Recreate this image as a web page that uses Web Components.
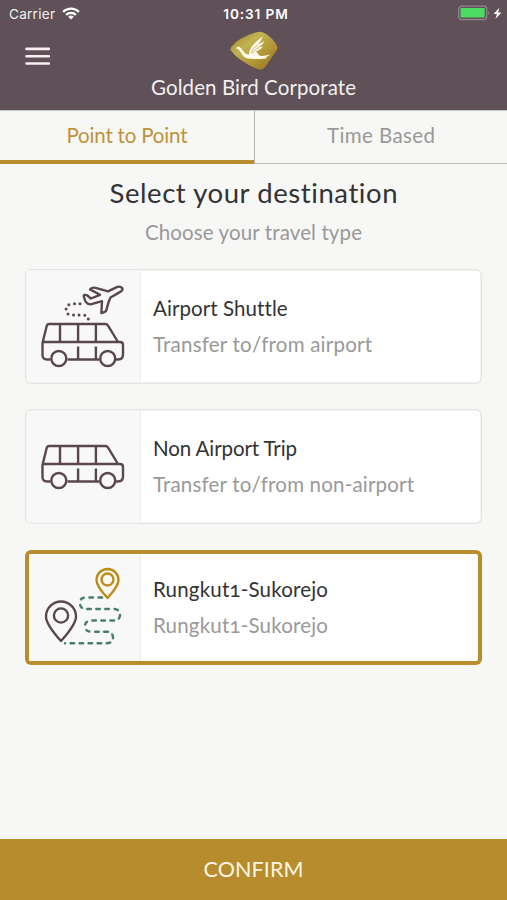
<!DOCTYPE html>
<html lang="en">
<head>
<meta charset="utf-8">
<title>Golden Bird Corporate</title>
<style>
html,body{margin:0;height:100%}
body{font-family:Lato,"Open Sans",sans-serif;background:#f7f7f6;color:#333;overflow:hidden}
</style>
</head>
<body>
<booking-app></booking-app>
<script>
const define = (name, html, setup) => customElements.define(name, class extends HTMLElement {
  connectedCallback() {
    if (this.shadowRoot) return;
    this.attachShadow({ mode: 'open' }).innerHTML = html;
    if (setup) setup.call(this, this.shadowRoot);
  }
});

/* One line of text, tracked so that it spans the given width. */
define('text-line', `<style>
  :host{display:block;white-space:nowrap;line-height:24px;font-size:20.500px;font-variant-numeric:oldstyle-nums}
  span{display:inline-block}
</style><span></span>`, function (root) {
  const s = root.querySelector('span');
  s.textContent = this.getAttribute('text');
  const w = +this.getAttribute('width'), n = s.textContent.length;
  const gap = (w - s.getBoundingClientRect().width) / (n - 1);
  s.style.letterSpacing = gap + 'px';
  s.style.marginRight = -gap + 'px';
});

define('status-bar', `<style>
  :host{display:grid;grid-template-columns:1fr auto 1fr;align-items:center;height:28px;padding:0 5px 0 9px;box-sizing:border-box;color:#f3eff1;font-family:Inter,sans-serif}
  text-line{font-size:13.6px;line-height:28px;font-variant-numeric:normal}
  .l,.r{display:flex;align-items:center}.l{gap:7px}.r{justify-content:flex-end}
  .l svg{margin-top:-2px}
  .t{font-weight:600;color:#fff}
  svg{display:block}
  .r svg{margin-top:-2px;margin-right:-1px}
</style>
<div class="l"><text-line text="Carrier" width="46"></text-line>
<svg width="18" height="13" viewBox="0 0 18 13" fill="none" stroke="#fff" stroke-width="2.2"><path d="M1.1 4.9a11.2 11.2 0 0 1 15.8 0M4.1 7.9a7 7 0 0 1 9.8 0"/><path d="M9 12.6 6.1 9.8a4.2 4.2 0 0 1 5.8 0z" fill="#fff" stroke="none"/></svg></div>
<text-line class="t" text="10:31 PM" width="64.500"></text-line>
<div class="r"><svg width="45" height="16" viewBox="0 0 45 16"><rect x=".7" y="1.2" width="28" height="13.4" rx="3" fill="none" stroke="#8f858a" stroke-width="1.3"/><rect x="2.5" y="3.1" width="24.2" height="9.5" rx="1" fill="#4cd964"/><path d="M30.2 5.5q2 2.3 0 4.6z" fill="#8f858a"/><path d="M41.5 2.8 35.500 9h3.4l-1.500 5 6-6.600H40z" fill="#fff"/></svg></div>`);

define('app-header', `<style>
  :host{display:block;height:111px;background:#5f5157;border-bottom:1px solid #c9c4c5;box-sizing:border-box}
  .main{display:grid;grid-template-columns:1fr auto 1fr;padding:3px 26px 0 25px}
  .menu{display:block;margin-top:16px}
  .brand{display:flex;flex-direction:column;align-items:center;gap:4px;color:#f3eff0}
  .brand svg{margin-left:3px}
  text-line{margin-left:1px}
</style>
<status-bar></status-bar>
<div class="main">
  <svg class="menu" width="26" height="19" viewBox="0 0 26 19" stroke="#f8f0f3" stroke-width="2.6" stroke-linecap="round"><path d="M1.500 1.900h22.300M1.500 9.300h22.300M1.500 16.500h22.300"/></svg>
  <div class="brand">
    <svg width="50" height="40" viewBox="0 0 50 40"><defs><linearGradient id="g" x1="0" y1="0" x2="1" y2="1"><stop offset="0" stop-color="#9b8421"/><stop offset=".35" stop-color="#c2b353"/><stop offset=".65" stop-color="#b19434"/><stop offset="1" stop-color="#92701e"/></linearGradient></defs>
      <path d="M2.7 15.5Q9 7 27.5 1.2q5-1.2 8.5 1.1Q45 8 48 15.2q1.2 2.5-.8 4.8l-11 16q-4 4.4-9 1.5Q10 30 2.2 20q-1.500-2.200.5-4.500z" fill="url(#g)"/>
      <path d="M7.2 17c1.2-2 3.7-1.7 4.9.2 2.1 3.5 4.5 6.3 8 6 .2-8 7.7-12.4 13.4-17.9-.5 4-2.7 5.7-4.7 7.7 2.7-.7 4.6-1.8 6.2-3.1-.7 3.6-3.1 5-6.1 6.2 1.9.3 3.4 0 5-.5-1.5 2.7-4.2 4-6.8 4.7l3 4.2c3.1 1 6.7.2 11-1.2-1.4 2-3.3 2.6-5.5 3 1 .2 2.1.3 3 .7-6.7 1.6-11.4 1-16.5.7-5.3.3-8.4-2.1-10.2-6.1-1-2.2-2.500-3.800-5.700-4.600z" fill="#fffbed"/>
      <path d="M22.2 22.5c.8-4 3.8-6.500 7-9M23.8 22.500c1.200-2.300 3-4.500 6-6" fill="none" stroke="#b49a38" stroke-width=".7"/></svg>
    <text-line text="Golden Bird Corporate" width="205"></text-line>
  </div><i></i>
</div>`);

define('tab-bar', `<style>
  :host{display:grid;grid-template-columns:254px 1fr;height:53px}
  div{display:flex;justify-content:center;box-sizing:border-box;padding-top:12px;border-bottom:1px solid #bdbbbc;color:#999}
  .on{color:#bd933a;border-bottom:4px solid #b78d2d}
  .off{border-left:1px solid #b5b2b3}
</style>
<div class="on"><text-line text="Point to Point" width="121"></text-line></div>
<div class="off"><text-line text="Time Based" width="108"></text-line></div>`);

const van = y => `<g transform="translate(-.5 ${y})"><path d="M12 57H8.500q-4.500 0-4.500-4.500V40.500L8.200 23.500q.5-2 2.500-2h56q2 0 3 1.800L79.500 39.500h2q3 0 3 3V52q0 5-5 5H77M61 57H29M4.300 39.500h75.500M21.500 22v17M39.600 22v17M57.400 22v17M39.600 44v13M57.400 44v13"/><circle cx="20.300" cy="56" r="7.500"/><circle cx="69.200" cy="56" r="7.500"/></g>`;
const art = {
  airport: van(22.5) + `<path d="M44.800 16.500c-.8-1.600 2.300-1.900 3.200-1.200l4 3.200 9-3.700-10-5.400c2-2.500 5-1.900 7.500-1.100l10.500 3 8.800-4.200c2.700-1.200 6 .2 5.700 2.600-.2 1.500-2 2.200-3.500 2.900L71.500 17.500c-2.500 4.500-3 9.500-4.500 13.500-1 1.400-3.200 1.700-4.600 2.100l.6-12-11.400 3.300c-4.700 0-5.600-3.800-6.800-7.900z"/><path d="M41 23.800H34q-7 0-7 6.200 0 5 7 5h9q6.300 0 6.600 5.700" stroke-width="3" stroke-linecap="round" stroke-dasharray="0 5.500"/>`,
  van: van(4.5),
  route: `<g transform="translate(0 1)"><path d="M22 79Q7 62.500 7 54.500a15 15 0 0 1 30 0Q37 62.500 22 79z"/><circle cx="22" cy="53.500" r="7.100"/><g stroke="#bd8c16"><path d="M68.500 36Q57.500 24 57.500 18a11 11 0 0 1 22 0Q79.500 24 68.500 36z"/><circle cx="68.500" cy="17.500" r="6"/></g><path d="M63 35.500H46.500q-5.500 0-5.500 5.500 0 6 6 6h27q7 0 7 5.700 0 5.800-7 5.800H53q-7 0-7 5.700 0 5.500 7 5.500h14q7 0 7 6 0 5.600-7 5.600H26" stroke="#477e71" stroke-width="2.500" stroke-linecap="round" stroke-dasharray="3.500 5.500"/></g>`
};
define('trip-card', `<style>
  :host{display:grid;grid-template-columns:116px 1fr;grid-template-rows:115px;height:115px;box-sizing:border-box;border-radius:6px;background:#fff;box-shadow:inset 0 0 0 1.500px #e5e5e3;overflow:hidden}
  :host([selected]){box-shadow:inset 0 0 0 4px #b78d2e}
  .pic{background:rgba(246,246,246,.75);border-right:1px solid #eeeeed;box-sizing:border-box;margin:1.500px 0 1.500px 1.500px;min-height:0}
  :host([selected]) .pic{margin:4px 0 4px 4px}
  :host([selected]) svg{margin:-3px 0 0 -3px}
  svg{display:block;margin:-.5px 0 0 -.5px}
  .txt{padding:27px 0 0 12px;display:flex;flex-direction:column;gap:12px}
  .b{color:#999}
</style>
<div class="pic"><svg width="114" height="112" viewBox="-13 -10 114 112" fill="none" stroke="#5a474e" stroke-width="2.400" stroke-linejoin="round"></svg></div>
<div class="txt"></div>`, function (root) {
  root.querySelector('svg').innerHTML = art[this.getAttribute('icon')];
  const [a, b, wa, wb] = ['name', 'note', 'name-width', 'note-width'].map(k => this.getAttribute(k));
  root.querySelector('.txt').innerHTML = `<text-line text="${a}" width="${wa}"></text-line><text-line class="b" text="${b}" width="${wb}"></text-line>`;
});

define('booking-app', `<style>
  :host{display:flex;flex-direction:column;height:900px;width:507px}
  main{flex:1;display:flex;flex-direction:column;align-items:center;padding-top:13px}
  .h{font-size:27.500px;line-height:32px}
  .s{color:#999;margin-top:11px}
  section{align-self:stretch;display:flex;flex-direction:column;gap:25.500px;padding:24.500px 25px 0}
  footer{height:61px;background:#b68c2c;color:#fff5e4;display:flex;justify-content:center;box-sizing:border-box;padding-top:16px}
  footer text-line{font-size:21.500px;line-height:28px}
</style>
<app-header></app-header><tab-bar></tab-bar>
<main>
  <text-line class="h" text="Select your destination" width="289"></text-line>
  <text-line class="s" text="Choose your travel type" width="217"></text-line>
  <section>
    <trip-card icon="airport" name="Airport Shuttle" name-width="134" note="Transfer to/from airport" note-width="219"></trip-card>
    <trip-card icon="van" name="Non Airport Trip" name-width="144" note="Transfer to/from non-airport" note-width="261"></trip-card>
    <trip-card selected icon="route" name="Rungkut1-Sukorejo" name-width="175" note="Rungkut1-Sukorejo" note-width="175"></trip-card>
  </section>
</main>
<footer><text-line text="CONFIRM" width="100"></text-line></footer>`);
</script>
</body>
</html>
